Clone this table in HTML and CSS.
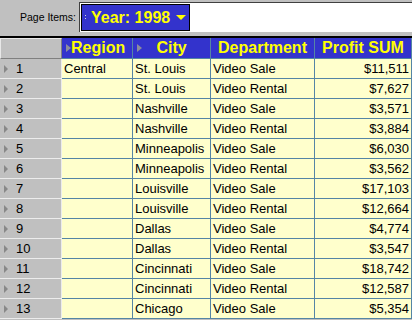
FILE: index.html
```html
<!DOCTYPE html>
<html>
<head>
<meta charset="utf-8">
<link rel="stylesheet" href="styles.css">
</head>
<body>
<div class="page-items">
  <span class="pi-label">Page Items:</span>
  <div class="pi-box">
    <div class="pi-item"><span class="grip"></span><span class="pi-text">Year: 1998</span><span class="caret"></span></div>
  </div>
</div>
<table class="grid">
  <colgroup>
    <col class="c-rh"><col class="c-region"><col class="c-city"><col class="c-dept"><col class="c-profit">
  </colgroup>
  <thead>
    <tr>
      <th class="corner"></th>
      <th class="hd"><div class="hd-in"><span class="tri"></span><span class="hd-t">Region</span><span class="sp"></span></div></th>
      <th class="hd"><div class="hd-in"><span class="tri"></span><span class="hd-t">City</span><span class="sp"></span></div></th>
      <th class="hd"><div class="hd-in"><span class="hd-t">Department</span></div></th>
      <th class="hd"><div class="hd-in"><span class="hd-t">Profit SUM</span></div></th>
    </tr>
  </thead>
  <tbody>
    <tr><td class="rh"><span class="rtri"></span>1</td><td>Central</td><td>St. Louis</td><td>Video Sale</td><td class="num">$11,511</td></tr>
    <tr><td class="rh"><span class="rtri"></span>2</td><td></td><td>St. Louis</td><td>Video Rental</td><td class="num">$7,627</td></tr>
    <tr><td class="rh"><span class="rtri"></span>3</td><td></td><td>Nashville</td><td>Video Sale</td><td class="num">$3,571</td></tr>
    <tr><td class="rh"><span class="rtri"></span>4</td><td></td><td>Nashville</td><td>Video Rental</td><td class="num">$3,884</td></tr>
    <tr><td class="rh"><span class="rtri"></span>5</td><td></td><td>Minneapolis</td><td>Video Sale</td><td class="num">$6,030</td></tr>
    <tr><td class="rh"><span class="rtri"></span>6</td><td></td><td>Minneapolis</td><td>Video Rental</td><td class="num">$3,562</td></tr>
    <tr><td class="rh"><span class="rtri"></span>7</td><td></td><td>Louisville</td><td>Video Sale</td><td class="num">$17,103</td></tr>
    <tr><td class="rh"><span class="rtri"></span>8</td><td></td><td>Louisville</td><td>Video Rental</td><td class="num">$12,664</td></tr>
    <tr><td class="rh"><span class="rtri"></span>9</td><td></td><td>Dallas</td><td>Video Sale</td><td class="num">$4,774</td></tr>
    <tr><td class="rh"><span class="rtri"></span>10</td><td></td><td>Dallas</td><td>Video Rental</td><td class="num">$3,547</td></tr>
    <tr><td class="rh"><span class="rtri"></span>11</td><td></td><td>Cincinnati</td><td>Video Sale</td><td class="num">$18,742</td></tr>
    <tr><td class="rh"><span class="rtri"></span>12</td><td></td><td>Cincinnati</td><td>Video Rental</td><td class="num">$12,587</td></tr>
    <tr><td class="rh"><span class="rtri"></span>13</td><td></td><td>Chicago</td><td>Video Sale</td><td class="num">$5,354</td></tr>
  </tbody>
</table>
</body>
</html>
```
FILE: styles.css
```css
html, body {
  margin: 0;
  padding: 0;
}
body {
  background: #c0c0c0;
  font-family: "Liberation Sans", Arial, sans-serif;
  width: 412px;
  height: 320px;
  overflow: hidden;
}
.page-items {
  display: flex;
  align-items: flex-start;
  height: 34px;
  padding-top: 2px;
}
.pi-label {
  box-sizing: border-box;
  width: 79px;
  padding-right: 3px;
  text-align: right;
  font-size: 10.5px;
  line-height: 30px;
  color: #000;
}
.pi-box {
  flex: 1;
  background: #fff;
  border-top: 1px solid #404040;
  border-left: 1px solid #404040;
  padding: 1px;
}
.pi-item {
  display: inline-flex;
  align-items: center;
  height: 25px;
  border: 1px solid #000;
  background: #3333cc;
  color: #ffff00;
  font-weight: bold;
  font-size: 16px;
  padding-right: 3px;
}
.grip {
  width: 1px;
  height: 6px;
  margin-left: 3px;
  background: repeating-linear-gradient(#d0d0d0 0 1px, transparent 1px 3px);
}
.pi-text {
  margin-left: 5px;
}
.caret {
  margin-left: 6px;
  width: 0;
  height: 0;
  border-left: 5px solid transparent;
  border-right: 5px solid transparent;
  border-top: 5px solid #ffff00;
}
.grid {
  border-collapse: separate;
  border-spacing: 0;
  table-layout: fixed;
  width: 412px;
  border-top: 2px solid #000;
  font-size: 13px;
}
.c-rh { width: 62px; }
.c-region { width: 71px; }
.c-city { width: 78px; }
.c-dept { width: 104px; }
.c-profit { width: 97px; }
.grid th, .grid td {
  box-sizing: border-box;
  padding: 0 2px;
  border-right: 1px solid #5585a5;
  border-bottom: 1px solid #5585a5;
  background: #ffffcc;
  color: #000;
  height: 20px;
  white-space: nowrap;
  overflow: hidden;
  text-align: left;
  font-weight: normal;
}
.grid th {
  height: 21px;
}
.grid .corner {
  background: #c0c0c0;
  border-top: 1px solid #e8e8e8;
  border-left: 1px solid #e8e8e8;
  border-right: 1px solid #808080;
  border-bottom: 1px solid #808080;
}
.grid .hd {
  padding: 0;
  background: #3333cc;
  color: #ffff00;
  font-weight: bold;
  font-size: 16px;
}
.hd-in {
  display: flex;
  align-items: center;
}
.tri {
  margin-left: 4px;
  width: 0;
  height: 0;
  border-top: 4px solid transparent;
  border-bottom: 4px solid transparent;
  border-left: 5px solid #8c8c9c;
}
.sp {
  width: 9px;
}
.hd-t {
  flex: 1;
  text-align: center;
}
.grid .rh {
  background: #c0c0c0;
  border-right: 1px solid #ececec;
  border-bottom: 1px solid #ececec;
  padding-left: 4px;
}
.rtri {
  display: inline-block;
  vertical-align: middle;
  margin-right: 8px;
  margin-top: -2px;
  width: 0;
  height: 0;
  border-top: 4px solid transparent;
  border-bottom: 4px solid transparent;
  border-left: 4px solid #888;
}
.grid .num {
  text-align: right;
}
```
